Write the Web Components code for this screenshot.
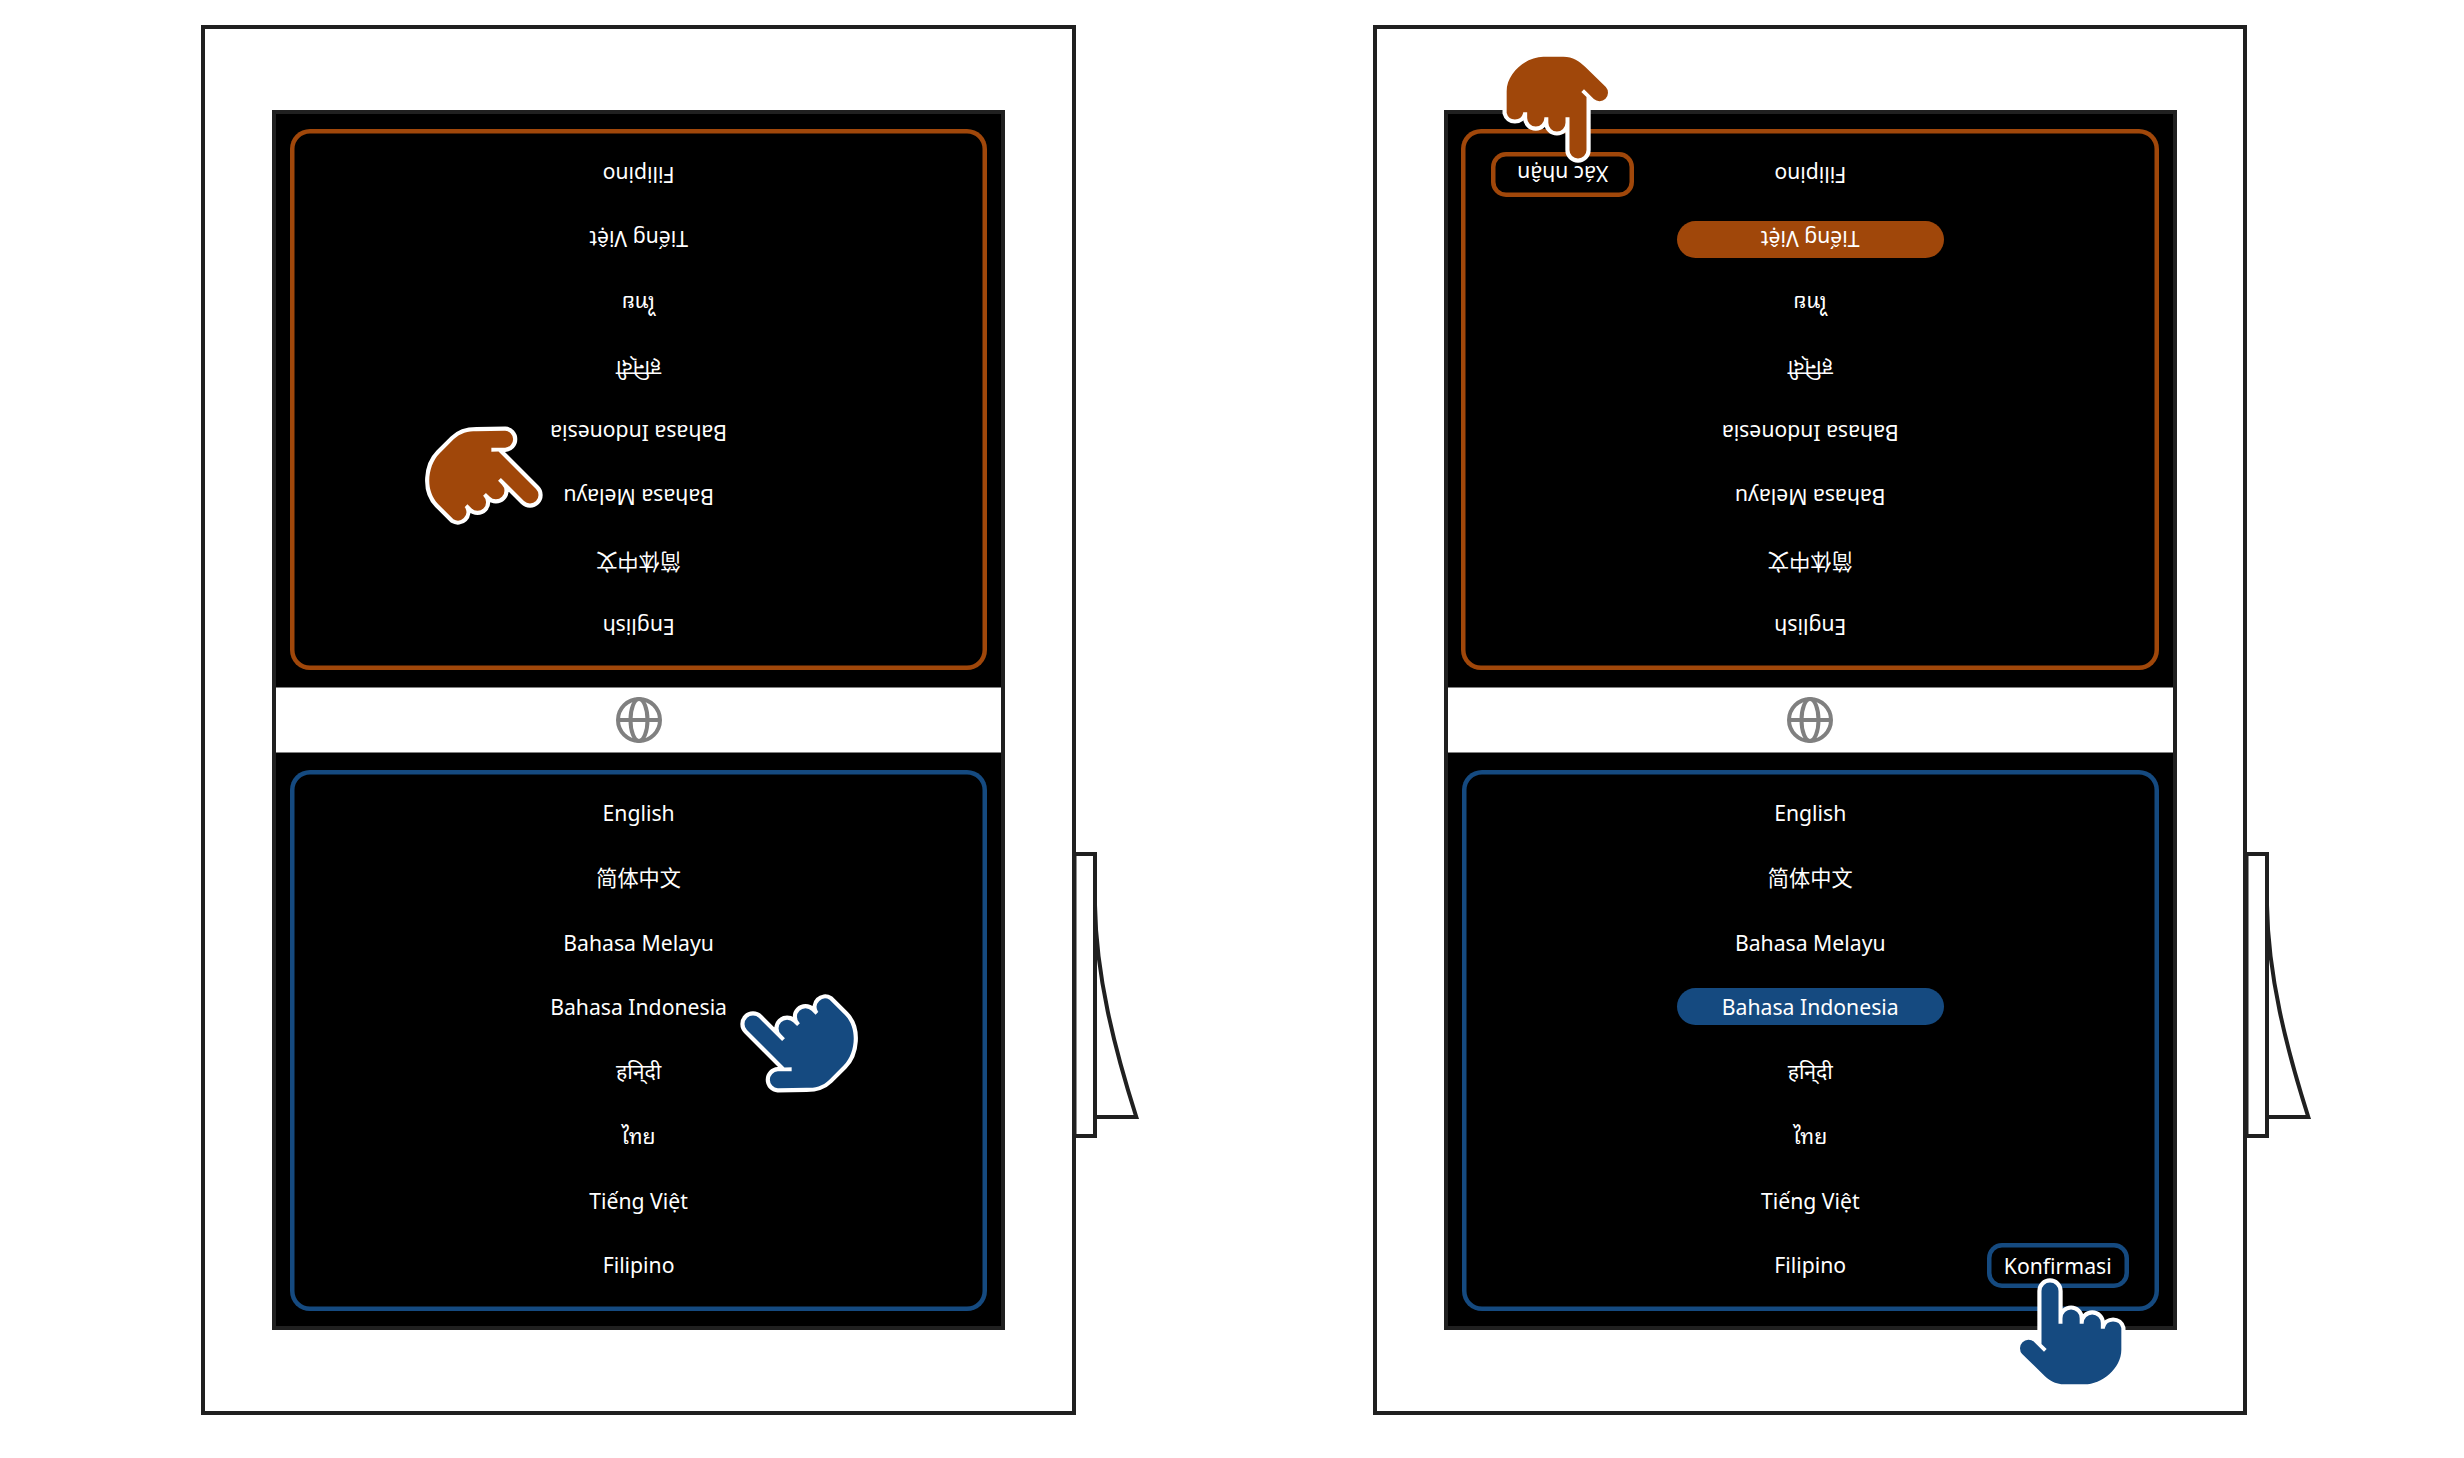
<!DOCTYPE html>
<html lang="en">
<head>
<meta charset="utf-8">
<title>Language selection</title>
<style>
  body { margin: 0; background: #fff; }
</style>
</head>
<body>
<language-stage></language-stage>
<script>
const define = (name, html, setup) => {
  const tpl = document.createElement('template');
  tpl.innerHTML = html;
  customElements.define(name, class extends HTMLElement {
    connectedCallback() {
      if (this.shadowRoot) return;
      const root = this.attachShadow({ mode: 'open' });
      root.append(tpl.content.cloneNode(true));
      if (setup) setup.call(this, root);
    }
  });
};

/* One language in the list; the chosen one is drawn as a pill. */
define('language-option', `
<style>
  :host { display: flex; flex: 1; align-items: center; justify-content: center; }
  span { display: flex; align-items: center; justify-content: center; box-sizing: border-box;
         width: 267px; height: 37px; padding-top: 1.2px; border-radius: 18.5px; white-space: nowrap; }
  :host(:lang(hi)) span { padding-top: 0; }
  :host([selected]) span { background: var(--tone); }
</style>
<span><slot></slot></span>`);

define('confirm-button', `
<style>
  :host { position: absolute; right: 30px; bottom: 23px; width: 142.5px; height: 44.5px;
          display: flex; align-items: center; justify-content: center; box-sizing: border-box;
          padding-top: 1px; border-radius: 15px; box-shadow: inset 0 0 0 4.5px var(--tone); }
</style>
<slot></slot>`);

/* One user's half of the screen; "flipped" turns it toward the person opposite. */
define('language-pane', `
<style>
  :host { display: block; box-sizing: border-box; height: 573px;
          padding: 16.5px var(--inset-right, 13.8px) 15.5px var(--inset-left, 14px);
          background: #000; color: #fff; --tone: #154a80;
          font: 21.2px/30px "Noto Sans", "Noto Sans Thai Looped", "Noto Sans Thai", "Noto Sans Devanagari", "Noto Sans CJK SC", sans-serif; }
  :host([flipped]) { transform: rotate(180deg); --tone: #a0470a;
          padding-left: var(--inset-right, 13.8px); padding-right: var(--inset-left, 14px); }
  .frame { position: relative; box-sizing: border-box; height: 100%; display: flex; flex-direction: column;
           padding: 11px 0 13.5px; border-radius: 20px; box-shadow: inset 0 0 0 4.5px var(--tone); }
</style>
<div class="frame">
  <language-option>English</language-option>
  <language-option lang="zh-Hans">简体中文</language-option>
  <language-option>Bahasa Melayu</language-option>
  <language-option>Bahasa Indonesia</language-option>
  <language-option lang="hi">हनि्दी</language-option>
  <language-option lang="th">ไทย</language-option>
  <language-option>Tiếng Việt</language-option>
  <language-option>Filipino</language-option>
  <slot></slot>
</div>`, function (root) {
  const pick = this.getAttribute('pick');
  if (pick) root.querySelectorAll('language-option')[+pick].setAttribute('selected', '');
});

define('globe-bar', `
<style>
  :host { display: flex; align-items: center; justify-content: center; box-sizing: border-box;
          height: 66px; padding-right: var(--globe-shift, 0); background: #fff;
          border: solid #808080; border-width: 1px 0; }
  svg { display: block; width: 46px; height: 46px; }
</style>
<svg viewBox="-23 -23 46 46" fill="none" stroke="#808080" stroke-width="4">
  <circle r="21"/><ellipse rx="8.5" ry="21"/><path d="M-21 0H21"/>
</svg>`);

/* Pointing hand; its origin is the centre of the fingertip. */
define('pointing-hand', `
<style>
  :host { position: absolute; display: block; width: 0; height: 0; }
  svg { display: block; width: 1px; height: 1px; overflow: visible; }
</style>
<svg><g>
  <path class="hand" id="edge" stroke="#fff" stroke-width="25" stroke-linejoin="round"/>
  <path class="hand" id="skin"/>
</g></svg>`, function (root) {
  const d = 'M-25.5 159L-10 174L-18 182L-47.5 153A25.5 25.5 0 0 0 -83.5 189L-22 249C-4 267 15 280 44 280H104C154 280 214 233 214 176V111A25.5 25.5 0 0 0 164.5 111V113H152.5V96A25.5 25.5 0 0 0 101 96V98H89V81.5A25.5 25.5 0 0 0 37.5 81.5V98H25.5V0A25.5 25.5 0 0 0 -25.5 0Z';
  root.querySelectorAll('.hand').forEach(p => p.setAttribute('d', d));
  root.getElementById('edge').setAttribute('fill', '#fff');
  root.getElementById('skin').setAttribute('fill', this.getAttribute('tone'));
  this.style.left = this.getAttribute('x') + 'px';
  this.style.top = this.getAttribute('y') + 'px';
  root.querySelector('g').setAttribute('transform', `rotate(${this.getAttribute('turn')}) scale(.33333)`);
});

define('kiosk-device', `
<style>
  :host { position: relative; display: flex; align-items: flex-start; width: 937px; height: 1390px; --case: 875px; }
  :host([narrow]) { --case: 874px; --inset-left: 13.5px; --inset-right: 14px; --globe-shift: 1px; }
  .body { box-sizing: border-box; flex: none; width: var(--case); height: 1390px; border: 4px solid #202020;
          padding: 81px 0 81px 67px; background: #fff; }
  .screen { box-sizing: border-box; width: 733px; height: 1220px; border: 4px solid #202020; }
  .reader { flex: none; margin: 827px 0 0 calc(871px - var(--case)); width: 66px; height: 286px; overflow: visible; }
</style>
<div class="body"><div class="screen">
  <slot name="top"></slot>
  <globe-bar></globe-bar>
  <slot name="bottom"></slot>
</div></div>
<svg class="reader" viewBox="1072 852 66 286" fill="none" stroke="#202020" stroke-width="4">
  <path d="M1074.5 854H1095V1136H1074.5Z"/>
  <path d="M1095 905C1096 975 1114 1047 1136.3 1117H1095"/>
</svg>
<slot></slot>`);

define('language-stage', `
<style>
  :host { display: flex; box-sizing: border-box; width: 2464px; height: 1458px; overflow: hidden;
          padding: 25px 0 0 201px; gap: 235px; background: #fff; }
  kiosk-device { flex: none; }
</style>
<kiosk-device>
  <language-pane slot="top" flipped></language-pane>
  <language-pane slot="bottom"></language-pane>
  <pointing-hand tone="#a0470a" x="328.5" y="469.5" turn="135"></pointing-hand>
  <pointing-hand tone="#154a80" x="551.5" y="998.7" turn="-45"></pointing-hand>
</kiosk-device>
<kiosk-device narrow>
  <language-pane slot="top" flipped pick="6"><confirm-button>Xác nhận</confirm-button></language-pane>
  <language-pane slot="bottom" pick="3"><confirm-button>Konfirmasi</confirm-button></language-pane>
  <pointing-hand tone="#a0470a" x="205.2" y="125.3" turn="180"></pointing-hand>
  <pointing-hand tone="#154a80" x="677.2" y="1265.5" turn="0"></pointing-hand>
</kiosk-device>`);
</script>
</body>
</html>
